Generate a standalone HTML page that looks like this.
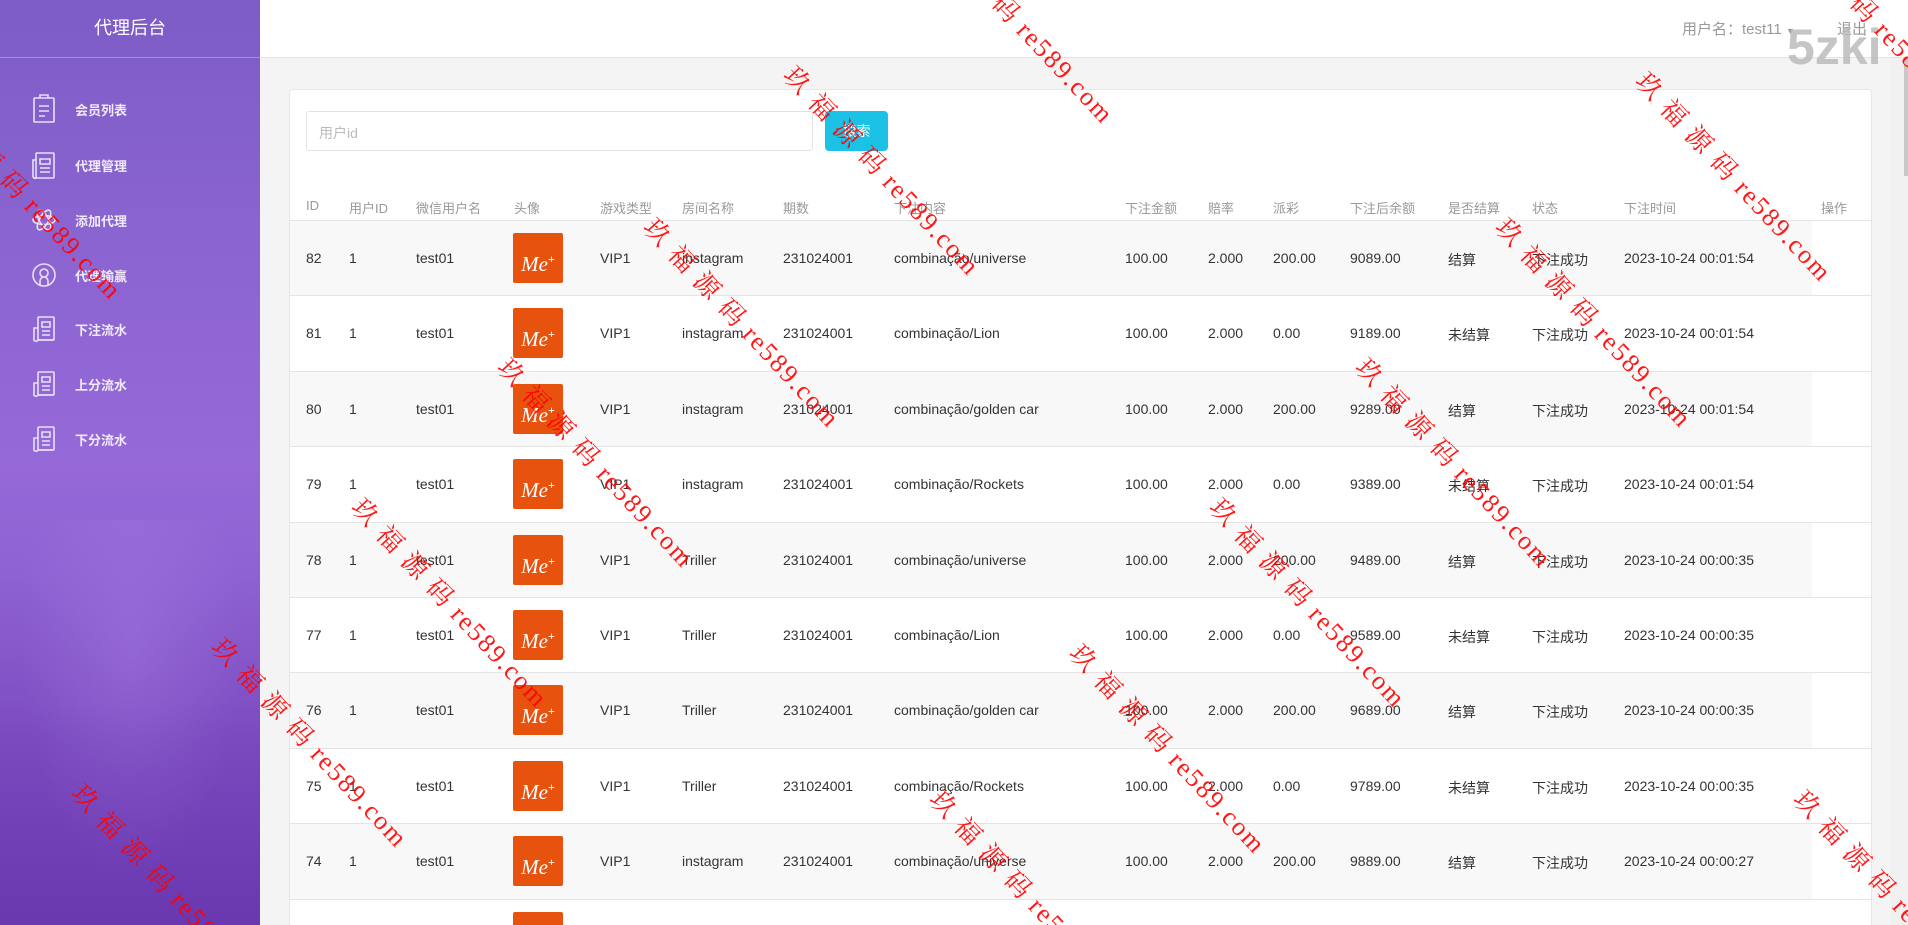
<!DOCTYPE html>
<html><head><meta charset="utf-8">
<style>
*{margin:0;padding:0;box-sizing:border-box}
html,body{width:1908px;height:925px;overflow:hidden}
body{position:relative;background:#f4f4f4;font-family:"Liberation Sans","Noto Sans CJK SC",sans-serif;color:#333}
#wrap{position:absolute;left:0;top:0;width:1908px;height:925px;overflow:hidden}
.side{position:absolute;left:0;top:0;width:260px;height:925px;background:linear-gradient(180deg,#7d5cc6 0%,#8a64d0 25%,#9669d8 50%,#8e62d2 62%,#7c4cc0 80%,#7240b8 100%);overflow:hidden}
.fog{position:absolute;left:0;width:260px}
.side .title{position:absolute;top:0;left:0;width:260px;height:58px;border-bottom:1px solid rgba(255,255,255,.3);color:#fff;font-size:18px;text-align:center;line-height:56px}
.mi{position:absolute;left:0;width:260px;height:30px}
.mi svg{position:absolute;left:31px;top:0}
.mi span{position:absolute;left:75px;top:6px;font-size:13px;font-weight:bold;color:#f0eaf8}
.top{position:absolute;left:260px;top:0;right:0;height:58px;background:#fff;border-bottom:1px solid #e2e2e2}
.user{position:absolute;top:18px;left:1682px;font-size:15px;color:#999}
.card{position:absolute;left:289px;top:89px;width:1583px;height:836px;overflow:hidden;background:#fff;border:1px solid #e6e6e6;border-bottom:none;border-radius:4px 4px 0 0}
.inp{position:absolute;left:16px;top:21px;width:507px;height:40px;border:1px solid #e2e2e2;border-radius:3px;font-size:14px;color:#bbb;padding:11px 12px}
.btn{position:absolute;left:535px;top:21px;width:63px;height:40px;background:#1cc1e6;border-radius:4px;color:#fff;font-size:14px;text-align:center;line-height:40px}
.th{position:absolute;top:108px;font-size:13px;color:#999}
.hl{position:absolute;left:0;top:130px;width:1581px;height:1px;background:#e4e4e4}
.row{position:absolute;left:0;width:1581px;height:75.4px;border-bottom:1px solid #e4e4e4}
.row.g .bg{position:absolute;left:0;top:0;width:1522px;height:100%;background:#f8f8f8}
.row .c{position:absolute;top:29px;font-size:14px;color:#333;white-space:nowrap}
.av{position:absolute;left:223px;top:12px;width:50px;height:50px;background:#e8520f;border-radius:2px;color:#fff;font-family:"Liberation Serif",serif;font-style:italic;font-size:21px;text-align:center;line-height:52px}
.av sup{font-size:12px;font-style:normal;font-weight:bold}
.wm{position:absolute;color:#f00;font-family:"Liberation Serif","Noto Serif CJK SC",serif;font-size:26px;letter-spacing:2px;white-space:nowrap;transform-origin:0 0;transform:rotate(47deg);opacity:.9}
.sb{position:absolute;right:0;top:58px;width:17px;height:867px;background:#f1f1f1}
.sb div{position:absolute;left:13px;top:0;width:4px;height:118px;background:#c8c8c8}
.zk{position:absolute;left:1787px;top:18px;font-size:50px;font-weight:bold;color:#bbb;opacity:.85}
</style></head><body><div id="wrap">
<div class="side">
 <div class="fog" style="top:520px;height:405px;background:radial-gradient(ellipse at 50% 30%,rgba(170,130,230,.35),rgba(0,0,0,0) 60%)"></div>
 <div class="fog" style="top:700px;height:225px;background:linear-gradient(180deg,rgba(90,40,160,0),rgba(90,40,160,.35))"></div>
 <div class="title">代理后台</div>
 <div class="mi" style="top:94px"><svg width="26" height="30" viewBox="0 0 26 30" fill="none" stroke="#e8e0f4" stroke-width="1.6"><rect x="3" y="4" width="20" height="24" rx="1"/><path d="M9 4V1h8v3M8 12h10M8 17h10M8 22h6"/></svg><span>会员列表</span></div>
 <div class="mi" style="top:150px"><svg width="26" height="30" viewBox="0 0 26 30" fill="none" stroke="#e8e0f4" stroke-width="1.6"><rect x="5" y="3" width="18" height="25" rx="1"/><path d="M5 10H2v16a2 2 0 0 0 3 2M9 9h10v5H9zM9 18h10M9 22h10"/></svg><span>代理管理</span></div>
 <div class="mi" style="top:205px"><svg width="26" height="30" viewBox="0 0 26 30" fill="none" stroke="#e8e0f4" stroke-width="1.6"><ellipse cx="13" cy="15" rx="11" ry="4.5"/><ellipse cx="13" cy="15" rx="11" ry="4.5" transform="rotate(60 13 15)"/><ellipse cx="13" cy="15" rx="11" ry="4.5" transform="rotate(-60 13 15)"/></svg><span>添加代理</span></div>
 <div class="mi" style="top:260px"><svg width="26" height="30" viewBox="0 0 26 30" fill="none" stroke="#e8e0f4" stroke-width="1.6"><circle cx="13" cy="15" r="11"/><path d="M9 25v-4a4 4 0 0 1 8 0v4M13 17a4 4 0 1 0 0-8 4 4 0 0 0 0 8"/></svg><span>代理输赢</span></div>
 <div class="mi" style="top:314px"><svg width="26" height="30" viewBox="0 0 26 30" fill="none" stroke="#e8e0f4" stroke-width="1.6"><rect x="7" y="3" width="16" height="23" rx="1"/><path d="M7 14H3v10a2 2 0 0 0 4 2h16M11 8h8v5h-8zM11 17h8M11 21h8"/></svg><span>下注流水</span></div>
 <div class="mi" style="top:369px"><svg width="26" height="30" viewBox="0 0 26 30" fill="none" stroke="#e8e0f4" stroke-width="1.6"><rect x="7" y="3" width="16" height="23" rx="1"/><path d="M7 14H3v10a2 2 0 0 0 4 2h16M11 8h8v5h-8zM11 17h8M11 21h8"/></svg><span>上分流水</span></div>
 <div class="mi" style="top:424px"><svg width="26" height="30" viewBox="0 0 26 30" fill="none" stroke="#e8e0f4" stroke-width="1.6"><rect x="7" y="3" width="16" height="23" rx="1"/><path d="M7 14H3v10a2 2 0 0 0 4 2h16M11 8h8v5h-8zM11 17h8M11 21h8"/></svg><span>下分流水</span></div>
</div>
<div class="top"></div>
<div class="user">用户名：test11 <span style="font-size:9px">▼</span></div>
<div class="user" style="left:1837px">退出</div>
<div class="card">
 <div class="inp">用户id</div>
 <div class="btn">搜索</div>
 <div class="th" style="left:16px">ID</div>
 <div class="th" style="left:59px">用户ID</div>
 <div class="th" style="left:126px">微信用户名</div>
 <div class="th" style="left:224px">头像</div>
 <div class="th" style="left:310px">游戏类型</div>
 <div class="th" style="left:392px">房间名称</div>
 <div class="th" style="left:493px">期数</div>
 <div class="th" style="left:604px">下注内容</div>
 <div class="th" style="left:835px">下注金额</div>
 <div class="th" style="left:918px">赔率</div>
 <div class="th" style="left:983px">派彩</div>
 <div class="th" style="left:1060px">下注后余额</div>
 <div class="th" style="left:1158px">是否结算</div>
 <div class="th" style="left:1242px">状态</div>
 <div class="th" style="left:1334px">下注时间</div>
 <div class="th" style="left:1531px">操作</div>
 <div class="hl"></div>
 <div id="rows"></div>
</div>
<div class="sb"><div></div></div>
<div class="zk">5zki</div>
<div id="wms"></div>
</div>
<script>
var d=[[82,"instagram","combinação/universe","200.00","9089.00","结算","00:01:54"],
[81,"instagram","combinação/Lion","0.00","9189.00","未结算","00:01:54"],
[80,"instagram","combinação/golden car","200.00","9289.00","结算","00:01:54"],
[79,"instagram","combinação/Rockets","0.00","9389.00","未结算","00:01:54"],
[78,"Triller","combinação/universe","200.00","9489.00","结算","00:00:35"],
[77,"Triller","combinação/Lion","0.00","9589.00","未结算","00:00:35"],
[76,"Triller","combinação/golden car","200.00","9689.00","结算","00:00:35"],
[75,"Triller","combinação/Rockets","0.00","9789.00","未结算","00:00:35"],
[74,"instagram","combinação/universe","200.00","9889.00","结算","00:00:27"],
[73,"instagram","combinação/Lion","0.00","9989.00","未结算","00:00:27"]];
var h="";
d.forEach(function(r,i){
 var t=131+i*75.4;
 h+='<div class="row'+(i%2==0?' g':'')+'" style="top:'+t+'px"><div class="bg"></div>'+
 '<div class="c" style="left:16px">'+r[0]+'</div><div class="c" style="left:59px">1</div>'+
 '<div class="c" style="left:126px">test01</div><div class="av">Me<sup>+</sup></div>'+
 '<div class="c" style="left:310px">VIP1</div><div class="c" style="left:392px">'+r[1]+'</div>'+
 '<div class="c" style="left:493px">231024001</div><div class="c" style="left:604px">'+r[2]+'</div>'+
 '<div class="c" style="left:835px">100.00</div><div class="c" style="left:918px">2.000</div>'+
 '<div class="c" style="left:983px">'+r[3]+'</div><div class="c" style="left:1060px">'+r[4]+'</div>'+
 '<div class="c" style="left:1158px">'+r[5]+'</div><div class="c" style="left:1242px">下注成功</div>'+
 '<div class="c" style="left:1334px">2023-10-24 '+r[6]+'</div></div>';
});
document.getElementById("rows").innerHTML=h;
var a=[[660,55],[545,180],[425,295],[305,410],[190,525],[75,645],[1360,60],[1245,180],[1130,295],[1010,410],[895,530],[780,650],[1490,650],[770,-70],[1475,-70],[-45,75],[-160,195],[-270,310]];
var w="";
a.forEach(function(p){w+='<div class="wm" style="left:'+(p[0]*1.217)+'px;top:'+(p[1]*1.217-10)+'px">玖 福 源 码 re589.com</div>';});
document.getElementById("wms").innerHTML=w;
</script>
</body></html>
